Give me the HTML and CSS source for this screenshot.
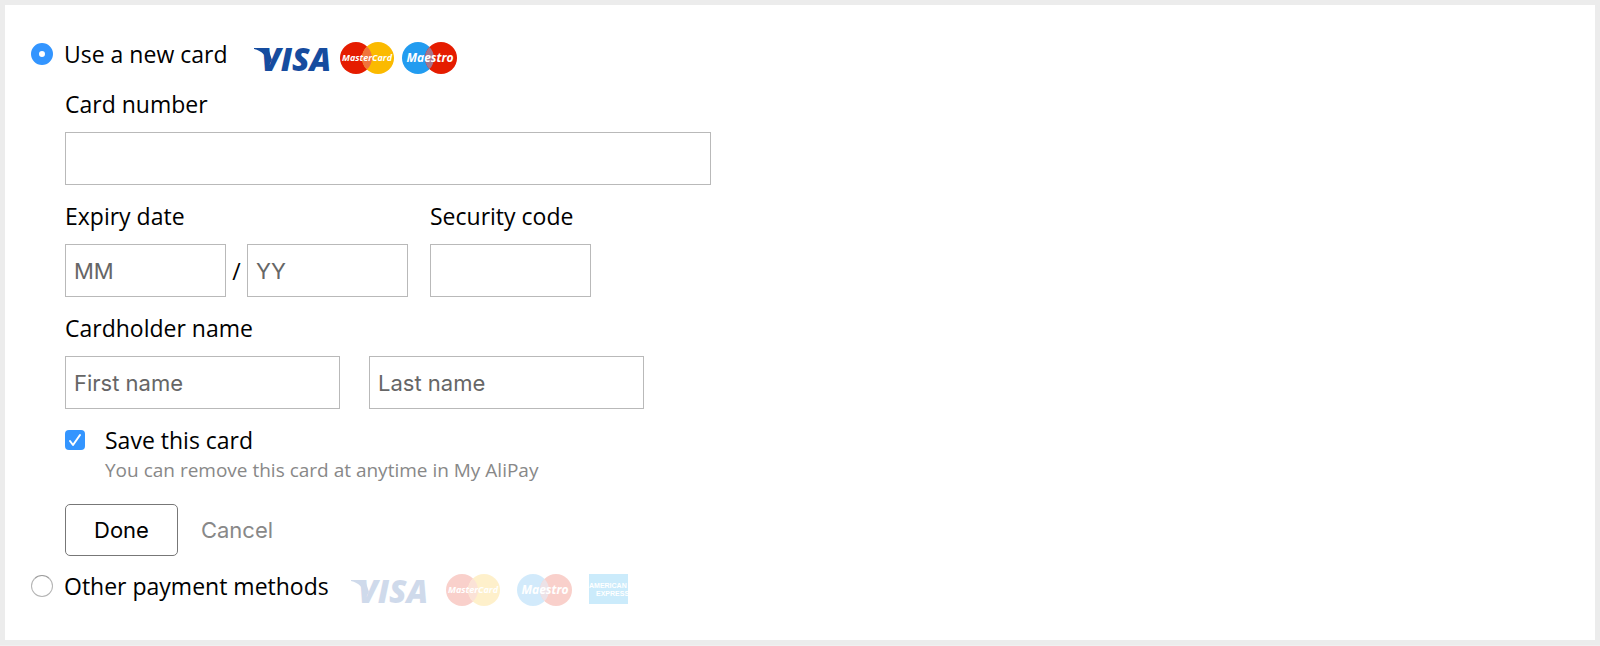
FILE: index.html
```html
<!DOCTYPE html>
<html lang="en">
<head>
<meta charset="utf-8">
<title>Payment method</title>
<meta name="viewport" content="width=device-width, initial-scale=1">
<link rel="stylesheet" href="styles.css">
</head>
<body>
<form class="panel">
  <div class="method">
    <input class="radio" type="radio" name="method" id="new-card" checked>
    <label for="new-card">Use a new card</label>
    <div class="brands">
      <svg class="visa" viewBox="0 0 78 32" role="img" aria-label="Visa">
        <path class="visa-ink" d="M0 6h11q3 0 4 3l3 9-3 5C12 13 8 9 0 7z"/>
        <text class="visa-text" x="7" y="29">VISA</text>
      </svg>
      <svg class="mastercard" viewBox="0 0 54 32" role="img" aria-label="MasterCard">
        <circle cx="16" cy="16" r="16" fill="#e51c00"/>
        <circle cx="38" cy="16" r="16" fill="#fbba00"/>
        <path d="M27 4.400a16 16 0 0 1 0 23.200a16 16 0 0 1 0-23.200z" fill="#f0733c"/>
        <text class="brand-text" x="27" y="19" text-anchor="middle">MasterCard</text>
      </svg>
      <svg class="maestro" viewBox="0 0 55 32" role="img" aria-label="Maestro">
        <circle cx="16" cy="16" r="16" fill="#229cf0"/>
        <circle cx="39" cy="16" r="16" fill="#e51c00"/>
        <path d="M27.500 4.900a16 16 0 0 1 0 22.200a16 16 0 0 1 0-22.200z" fill="#a6758c"/>
        <text class="brand-text brand-text-large" x="28" y="20" text-anchor="middle">Maestro</text>
      </svg>
    </div>
  </div>

  <div class="card-form">
    <div class="field field-number">
      <label for="number">Card number</label>
      <input class="text-box" id="number" type="text" inputmode="numeric">
    </div>
    <div class="row row-expiry">
      <div class="field">
        <label for="month">Expiry date</label>
        <div class="expiry">
          <input class="text-box short" id="month" type="text" placeholder="MM">
          <span class="slash">/</span>
          <input class="text-box short" id="year" type="text" placeholder="YY" aria-label="Expiry year">
        </div>
      </div>
      <div class="field">
        <label for="code">Security code</label>
        <input class="text-box short" id="code" type="text">
      </div>
    </div>
    <div class="field">
      <label for="first">Cardholder name</label>
      <div class="row row-names">
        <input class="text-box name" id="first" type="text" placeholder="First name">
        <input class="text-box name" id="last" type="text" placeholder="Last name" aria-label="Last name">
      </div>
    </div>
    <div class="save">
      <input class="checkbox" type="checkbox" id="save" checked>
      <label for="save">Save this card</label>
      <p class="hint">You can remove this card at anytime in My AliPay</p>
    </div>
    <div class="actions">
      <button class="done" type="button">Done</button>
      <button class="cancel" type="button">Cancel</button>
    </div>
  </div>

  <div class="method">
    <input class="radio" type="radio" name="method" id="other">
    <label for="other">Other payment methods</label>
    <div class="brands brands-muted">
      <svg class="visa" viewBox="0 0 78 32" role="img" aria-label="Visa">
        <path class="visa-ink" d="M0 6h11q3 0 4 3l3 9-3 5C12 13 8 9 0 7z"/>
        <text class="visa-text" x="7" y="29">VISA</text>
      </svg>
      <svg class="mastercard" viewBox="0 0 54 32" role="img" aria-label="MasterCard">
        <circle cx="16" cy="16" r="16" fill="#e51c00"/>
        <circle cx="38" cy="16" r="16" fill="#fbba00"/>
        <path d="M27 4.400a16 16 0 0 1 0 23.200a16 16 0 0 1 0-23.200z" fill="#f0733c"/>
        <text class="brand-text" x="27" y="19" text-anchor="middle">MasterCard</text>
      </svg>
      <svg class="maestro" viewBox="0 0 55 32" role="img" aria-label="Maestro">
        <circle cx="16" cy="16" r="16" fill="#229cf0"/>
        <circle cx="39" cy="16" r="16" fill="#e51c00"/>
        <path d="M27.500 4.900a16 16 0 0 1 0 22.200a16 16 0 0 1 0-22.200z" fill="#a6758c"/>
        <text class="brand-text brand-text-large" x="28" y="20" text-anchor="middle">Maestro</text>
      </svg>
      <svg class="amex" viewBox="0 0 39 30" role="img" aria-label="American Express">
        <path fill="#009fee" d="M0 0h39v30H0z"/>
        <text class="amex-text" x="0" y="14">AMERICAN</text>
        <text class="amex-text" x="7" y="22">EXPRESS</text>
      </svg>
    </div>
  </div>
</form>
</body>
</html>
```
FILE: styles.css
```css
* {
  box-sizing: border-box;
}

body {
  margin: 0;
  background: #f0f0f0;
  color: #000;
  font: 23px/32px "Open Sans", "Noto Sans", sans-serif;
}

.panel {
  padding: 33px 26px 38px;
  border: 5px solid #ececec;
  background: #fff;
}

.method {
  display: flex;
  align-items: center;
}

.radio {
  appearance: none;
  flex: none;
  width: 22px;
  height: 22px;
  margin: 0 11px 0 0;
  border: 1px solid #b4b4b4;
  border-top-color: #9a9a9a;
  border-radius: 50%;
  background: #fff;
}

.radio:checked {
  border: 8px solid #3395ff;
}

.brands {
  display: flex;
  align-items: flex-start;
  gap: 8px;
  height: 32px;
  margin: 4px 0 -4px 27px;
}

.brands svg {
  overflow: visible;
}

.brands-muted {
  gap: 17px;
  margin-left: 22px;
  opacity: 0.2;
}

.visa {
  width: 78px;
  height: 32px;
}

.mastercard {
  width: 54px;
  height: 32px;
}

.maestro {
  width: 55px;
  height: 32px;
}

.amex {
  width: 39px;
  height: 30px;
}

.visa-ink,
.visa-text {
  fill: #164c9f;
}

.visa-text {
  font: italic 800 32px "Open Sans", sans-serif;
}

.brand-text {
  fill: #fff;
  font: italic 700 9px "Open Sans", sans-serif;
}

.brand-text-large {
  font-size: 12px;
}

.amex-text {
  fill: #fff;
  font: 700 7px "Liberation Sans", sans-serif;
}

.card-form {
  display: flex;
  flex-direction: column;
  gap: 15px;
  margin: 18px 0 14px 34px;
}

.field {
  display: flex;
  flex-direction: column;
  gap: 12px;
}

.field-number {
  max-width: 646px;
}

.text-box {
  width: 100%;
  height: 53px;
  padding: 0 8px;
  border: 1px solid #b9b9b9;
  border-radius: 0;
  background: #fff;
  color: #000;
  font: 22px "Inter", sans-serif;
}

.text-box::placeholder {
  color: #666;
  opacity: 1;
}

.short {
  width: 161px;
}

.name {
  width: 275px;
}

.row {
  display: flex;
  flex-wrap: wrap;
}

.row-expiry {
  gap: 15px 22px;
}

.row-names {
  gap: 15px 29px;
}

.expiry {
  display: flex;
  align-items: center;
}

.slash {
  width: 21px;
  text-align: center;
}

.save {
  display: grid;
  grid-template-columns: 20px 1fr;
  column-gap: 20px;
  align-items: center;
}

.checkbox {
  appearance: none;
  width: 20px;
  height: 20px;
  margin: 0;
  border-radius: 4px;
  background: #3395ff url("data:image/svg+xml,%3Csvg xmlns='http://www.w3.org/2000/svg' viewBox='0 0 20 20'%3E%3Cpath d='M5 11l3 4 7-10' fill='none' stroke='white' stroke-width='2' stroke-linecap='round' stroke-linejoin='round'/%3E%3C/svg%3E");
}

.checkbox:not(:checked) {
  border: 1px solid #b4b4b4;
  background: #fff;
}

.hint {
  grid-column: 2;
  margin: 0;
  color: #888;
  font-size: 19px;
  line-height: 28px;
}

.actions {
  display: flex;
  align-items: center;
  gap: 23px;
  margin-top: 5px;
}

.done,
.cancel {
  border: 0;
  background: none;
  font: 22px "Inter", sans-serif;
}

.done {
  height: 52px;
  padding: 0 28px;
  border: 1px solid #777;
  border-radius: 5px;
  color: #000;
}

.cancel {
  padding: 0;
  color: #888;
}
```
